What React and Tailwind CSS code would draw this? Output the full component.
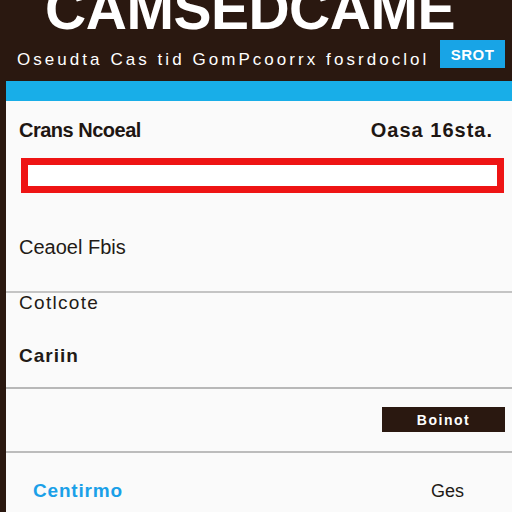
import React from 'react';

export default function App() {
  return (
    <div className="w-[512px] h-[512px] overflow-hidden bg-[#2a1810] flex flex-col" style={{ fontFamily: '"Liberation Sans", Arial, sans-serif' }}>
      {/* Header */}
      <div className="h-[81px] flex flex-col shrink-0">
        <h1 className="text-[57px] leading-none font-bold text-white text-center mt-[-19px] tracking-[-0.5px] pr-[12px]">
          CAMSEDCAME
        </h1>
        <div className="flex items-start justify-between pl-[17px] pr-[7px] mt-[2px]">
          <span className="text-[17px] leading-none text-white tracking-[3.05px] mt-[11px]">Oseudta Cas tid GomPcoorrx fosrdoclol</span>
          <button className="w-[65px] h-[28px] bg-[#18a4e6] text-white text-[15px] leading-none font-bold tracking-[0.5px]">SROT</button>
        </div>
      </div>

      {/* Panel */}
      <div className="flex-1 ml-[6px] bg-[#fafafa] flex flex-col">
        <div className="h-[20px] bg-[#18aee8] shrink-0" />

        <div className="flex items-center justify-between pl-[13px] pr-[19px] mt-[19px]">
          <span className="text-[20px] leading-none font-bold text-[#1e1612] tracking-[-0.5px]">Crans Ncoeal</span>
          <span className="text-[20px] leading-none font-bold text-[#1e1612] tracking-[1px]">Oasa 16sta.</span>
        </div>

        <div className="ml-[15px] mr-[8px] mt-[18px] h-[35px] border-[7px] border-[#ee1414] bg-white shrink-0" />

        <div className="pl-[13px] mt-[44px] text-[20px] leading-none text-[#221a16]">Ceaoel Fbis</div>

        <div className="mt-[34px] h-[2px] bg-[#c4c4c4] shrink-0" />

        <div className="pl-[13px] text-[19px] leading-none text-[#221a16] tracking-[1.3px]">Cotlcote</div>

        <div className="pl-[13px] mt-[34px] text-[19px] leading-none font-bold text-[#221a16] tracking-[1px]">Cariin</div>

        <div className="mt-[22px] h-[2px] bg-[#b8b8b8] shrink-0" />

        <div className="flex justify-end pr-[7px] mt-[18px]">
          <button className="w-[123px] h-[25px] bg-[#2a1810] text-white text-[14px] leading-none font-bold tracking-[1.5px]">Boinot</button>
        </div>

        <div className="mt-[19px] h-[2px] bg-[#bcbcbc] shrink-0" />

        <div className="flex items-baseline justify-between pl-[27px] pr-[48px] mt-[28px]">
          <span className="text-[19px] leading-none font-bold text-[#1aa0e8] tracking-[0.8px]">Centirmo</span>
          <span className="text-[18px] leading-none text-[#221a16]">Ges</span>
        </div>
      </div>
    </div>
  );
}
